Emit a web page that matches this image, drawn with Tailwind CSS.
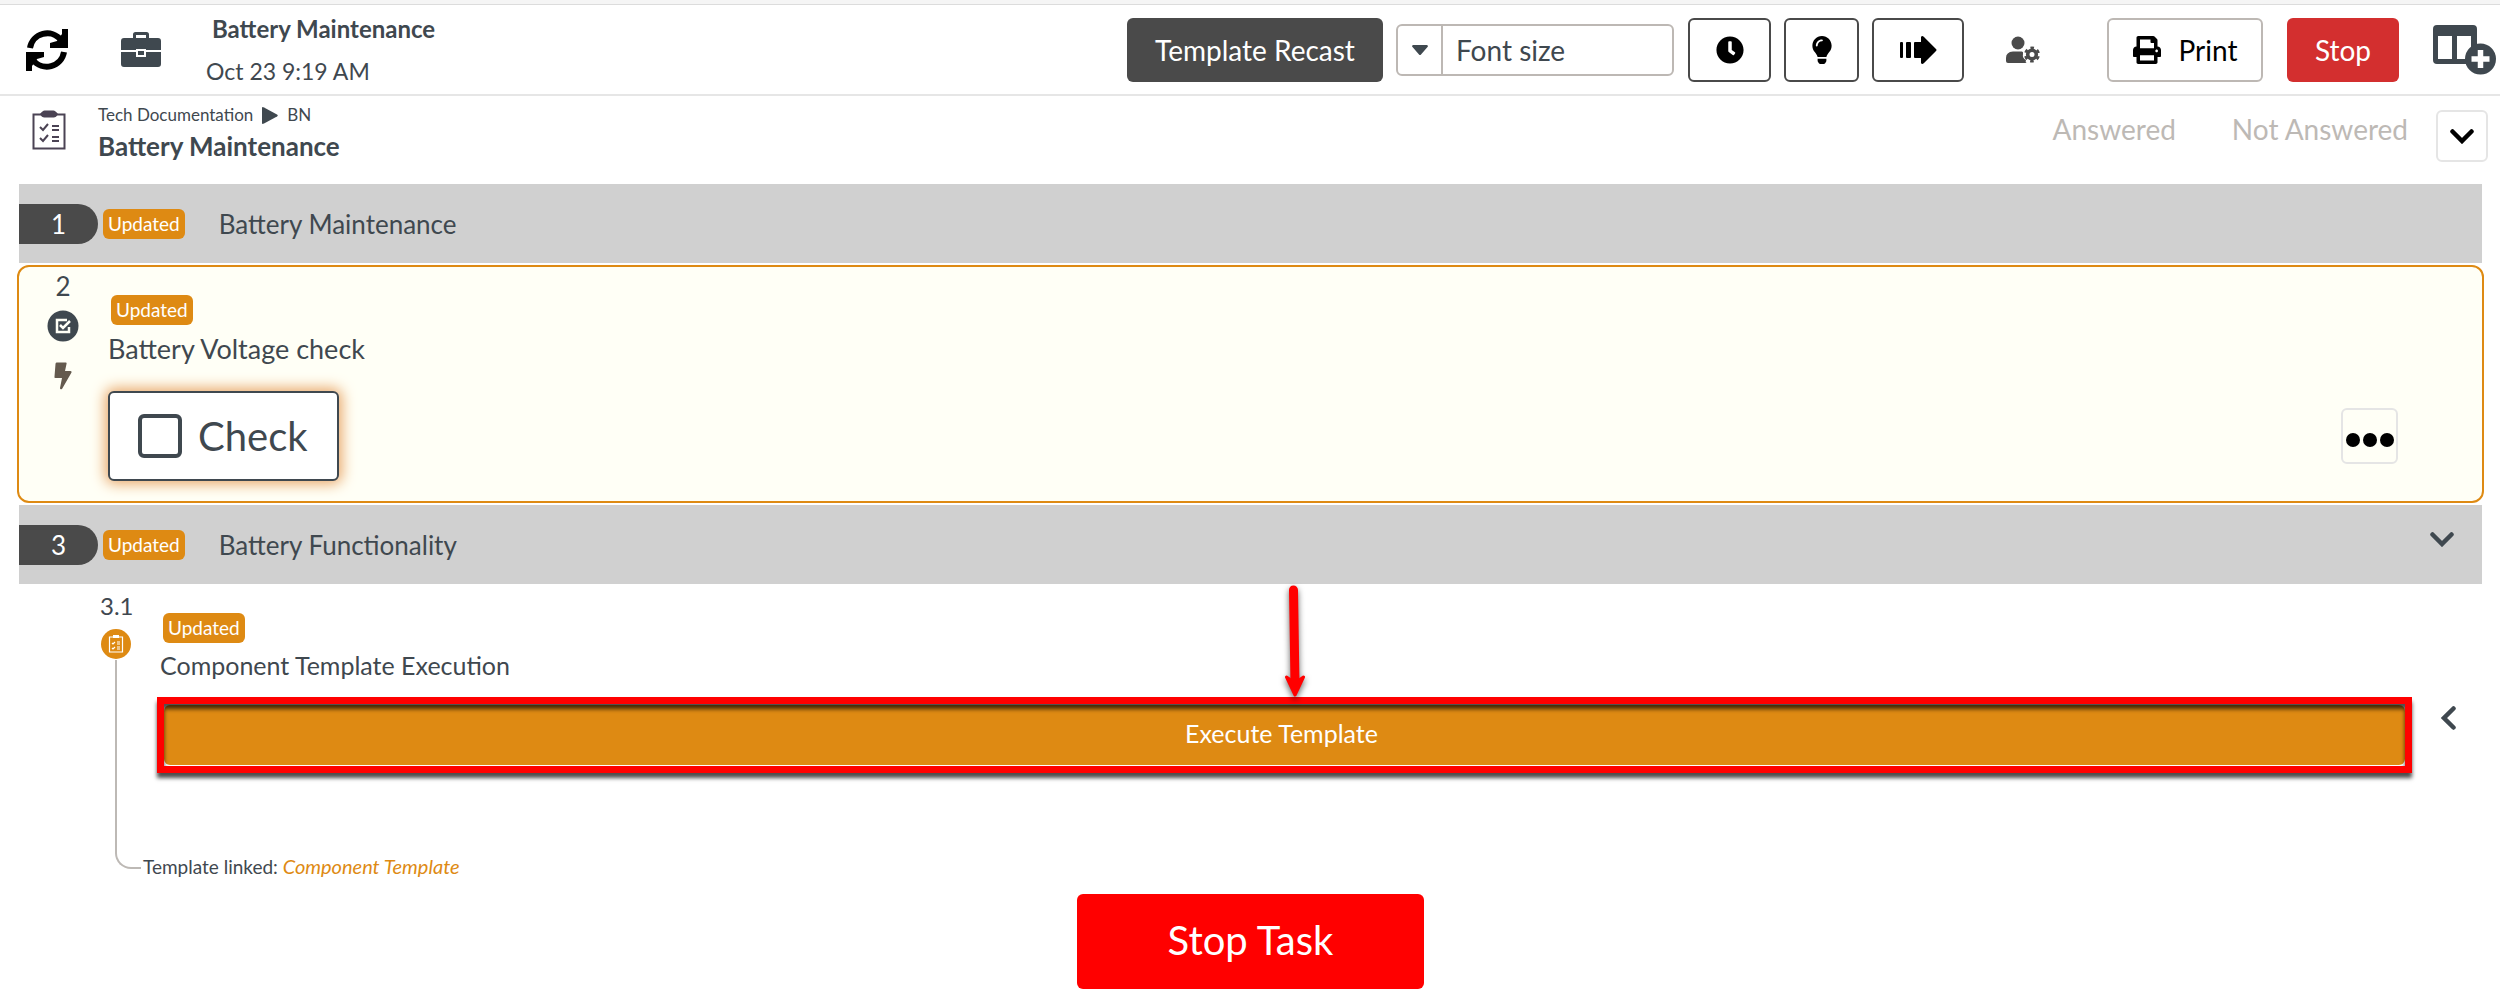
<!DOCTYPE html>
<html lang="en">
  <head>
    <meta charset="UTF-8" />
    <meta name="viewport" content="width=device-width, initial-scale=1.0" />
    <title>Battery Maintenance</title>
    <script src="https://cdn.jsdelivr.net/npm/@tailwindcss/browser@4"></script>
  </head>

  <body class="bg-white font-['Lato',sans-serif] text-[26px] leading-[32px] text-[#3f484f]">
    <div class="h-[5px] bg-[#f5f5f5] border-b border-[#dcdcdc]"></div>

    <!-- Top bar -->
    <header class="flex items-center h-[91px] pl-[26px] pr-1 border-b-2 border-[#e6e6e6]">
      <button type="button" aria-label="Refresh">
        <svg class="w-[42px] h-[42px]" viewBox="0 0 42 42" fill="none" stroke="#000" stroke-width="6">
          <path d="M4 19A17.5 17.5 0 0 1 35 11" />
          <path d="M38 23A17.5 17.5 0 0 1 7 31" />
          <path d="M42 0V19H24V14L31 12L36 5V0Z" fill="#000" stroke="none" />
          <path d="M0 42V23H18V28L11 30L6 37V42Z" fill="#000" stroke="none" />
        </svg>
      </button>
      <svg class="w-10 h-[35px] ml-[53px]" viewBox="0 0 40 35" fill="#3f484f">
        <path d="M13.500 6V2.500Q13.500 1.500 14.500 1.500H25.500Q26.500 1.500 26.500 2.500V6" fill="none" stroke="#3f484f" stroke-width="3" />
        <path d="M3 6H37Q40 6 40 9V18H25V17H15V18H0V9Q0 6 3 6Z" />
        <path d="M0 20H15V25H25V20H40V32Q40 35 37 35H3Q0 35 0 32Z" />
        <path d="M17 19H23V23H17Z" />
      </svg>
      <div class="ml-[45px] leading-[42px]">
        <h1 class="pl-1.5 text-[24px] font-bold">Battery Maintenance</h1>
        <p class="text-[23px]">Oct 23 9:19 AM</p>
      </div>

      <div class="flex items-center ml-auto text-[28px]">
        <button type="button" class="w-[256px] h-16 rounded-md bg-[#4a4a4a] text-white">Template Recast</button>
        <div class="flex ml-[13px] w-[278px] h-[52px] border-2 border-[#bdb8b4] rounded-md">
          <button type="button" class="flex items-center justify-center shrink-0 w-[45px] border-r-2 border-[#bdb8b4]" aria-label="Show font sizes">
            <svg class="w-4 h-[10px]" viewBox="0 0 16 10" fill="#3f484f"><path d="M1 0H15Q16.500 1 15.500 2L9 9.500Q8 10.500 7 9.500L.5 2Q-.5 1 1 0Z" /></svg>
          </button>
          <input type="text" aria-label="Font size" placeholder="Font size" class="w-full pl-[13px] text-[28px] outline-none placeholder:text-[#3f484f]" />
        </div>
        <button type="button" class="flex items-center justify-center ml-[14px] w-[83px] h-16 border-2 border-[#4a4a4a] rounded-md" aria-label="Time">
          <svg class="w-7 h-7" viewBox="0 0 512 512"><path d="M256,8C119,8,8,119,8,256S119,504,256,504,504,393,504,256,393,8,256,8Zm92.49,313h0l-20,25a16,16,0,0,1-22.49,2.500h0l-67-49.720a40,40,0,0,1-15-31.230V112a16,16,0,0,1,16-16h32a16,16,0,0,1,16,16V256l58,42.500A16,16,0,0,1,348.490,321Z" /></svg>
        </button>
        <button type="button" class="flex items-center justify-center ml-[13px] w-[75px] h-16 border-2 border-[#4a4a4a] rounded-md" aria-label="Hint">
          <svg class="w-5 h-7" viewBox="0 0 352 512"><path d="M96.060 454.350c.01 6.290 1.870 12.450 5.360 17.690l17.090 25.690a31.990 31.990 0 0 0 26.640 14.280h61.710a31.990 31.990 0 0 0 26.640-14.280l17.090-25.690a31.989 31.989 0 0 0 5.360-17.690l.04-38.350H96.010l.05 38.350zM0 176c0 44.370 16.450 84.850 43.560 115.780 16.520 18.850 42.360 58.230 52.210 91.450.04.26.07.52.11.78h160.240c.04-.26.07-.51.11-.78 9.850-33.220 35.690-72.600 52.210-91.450C335.550 260.850 352 220.370 352 176 352 78.610 272.910-.3 175.450 0 73.440.31 0 82.970 0 176zm176-80c-44.110 0-80 35.890-80 80 0 8.840-7.160 16-16 16s-16-7.160-16-16c0-61.760 50.240-112 112-112 8.840 0 16 7.160 16 16s-7.160 16-16 16z" /></svg>
        </button>
        <button type="button" class="flex items-center justify-center ml-[13px] w-[92px] h-16 border-2 border-[#4a4a4a] rounded-md" aria-label="Next step">
          <svg class="w-[37px] h-7" viewBox="0 0 37 28">
            <rect x="0" y="6" width="3" height="16" rx="1" />
            <rect x="6" y="6" width="5" height="16" rx="1" />
            <path d="M15 6H21V1Q22 -1 24 1L36 13Q37 14 36 15L24 27Q22 29 21 27V22H15Q14 22 14 21V7Q14 6 15 6Z" />
          </svg>
        </button>
        <button type="button" class="ml-[42px]" aria-label="User settings">
          <svg class="w-[34px] h-7" viewBox="0 0 34 28" fill="#4a4a4a">
            <circle cx="12" cy="7" r="6.500" />
            <path d="M7 15.500H16Q17.500 15.500 17 18Q16 22 20 24Q19 27 21 27H2Q0 27 0 25V22Q0 16 7 15.500Z" />
            <circle cx="26" cy="18.500" r="4.300" fill="none" stroke="#4a4a4a" stroke-width="3.600" />
            <circle cx="26" cy="18.500" r="6.800" fill="none" stroke="#4a4a4a" stroke-width="2.400" stroke-dasharray="3.560 3.560" stroke-dashoffset="-1.780" />
          </svg>
        </button>
        <button type="button" class="flex items-center justify-center gap-[18px] ml-[67px] w-[156px] h-16 border-2 border-[#bdb8b4] rounded-md text-black">
          <svg class="w-7 h-7" viewBox="0 0 512 512"><path d="M448 192V77.250c0-8.490-3.370-16.620-9.370-22.630L393.370 9.370c-6-6-14.140-9.370-22.630-9.370H96C78.330 0 64 14.330 64 32v160c-35.350 0-64 28.650-64 64v112c0 8.840 7.160 16 16 16h48v96c0 17.670 14.330 32 32 32h320c17.670 0 32-14.330 32-32v-96h48c8.840 0 16-7.160 16-16V256c0-35.350-28.650-64-64-64zm-64 256H128v-96h256v96zm0-224H128V64h192v48c0 8.840 7.160 16 16 16h48v96zm48 72c-13.250 0-24-10.750-24-24 0-13.260 10.750-24 24-24s24 10.740 24 24c0 13.250-10.750 24-24 24z" /></svg>
          Print
        </button>
        <button type="button" class="ml-6 w-28 h-16 rounded-md bg-[#d32f2f] text-white">Stop</button>
        <button type="button" class="ml-[34px]" aria-label="Add column">
          <svg class="w-[63px] h-[50px]" viewBox="0 0 63 50">
            <path fill="#3f484f" fill-rule="evenodd" d="M4 0H40Q44 0 44 4V35Q44 39 40 39H4Q0 39 0 35V4Q0 0 4 0ZM5 11V34H19V11ZM24 11V34H38V11Z" />
            <circle cx="47.500" cy="34" r="15.500" fill="#3f484f" />
            <path d="M47.500 25V43M38.500 34H56.500" stroke="#fff" stroke-width="5.500" />
          </svg>
        </button>
      </div>
    </header>

    <!-- Document title -->
    <div class="flex h-[88px] pl-8 pr-3 pt-[14px]">
      <svg class="w-[34px] h-10" viewBox="0 0 34 40" fill="none" stroke="#4b4354" stroke-width="2">
        <path d="M1.500 4.500H32.500V38.500H1.500Z" />
        <path d="M8 4Q11 0 13 .5H21Q23 0 26 4Q24 8 21 7.500H13Q10 8 8 4Z" fill="#4b4354" stroke="none" />
        <path d="M8 17L11 20L16 14M8 28L11 31L16 25M20 16H27M20 20H27M20 27H27M20 31H27" />
      </svg>
      <div class="-mt-2.5 ml-8">
        <nav class="flex items-center h-[30px] text-[17px]" aria-label="Breadcrumb">
          <a href="#">Tech Documentation</a>
          <svg class="w-4 h-[17px] mx-[9px]" viewBox="0 0 16 17" fill="#3f484f"><path d="M0 1Q0-.5 2 .5L15 7.500Q16.500 8.500 15 9.500L2 16.500Q0 17.500 0 16Z" /></svg>
          <a href="#">BN</a>
        </nav>
        <h2 class="font-bold">Battery Maintenance</h2>
      </div>
      <div class="flex ml-auto text-[28px] leading-[38px] text-[#bdb9b5]">
        <span>Answered</span>
        <span class="ml-14">Not Answered</span>
        <button type="button" class="flex items-center justify-center ml-[28px] size-[52px] border-2 border-[#e5e5e5] rounded-md" aria-label="Expand">
          <svg class="w-6 h-[15px]" viewBox="0 0 24 15" fill="none" stroke="#000" stroke-width="4.500" stroke-linecap="round"><path d="M2.500 2.500L12 12L21.500 2.500" /></svg>
        </button>
      </div>
    </div>

    <main class="pl-[17px] pr-4">
      <!-- Step 1 -->
      <section class="flex items-center mx-0.5 h-[79px] bg-[#d0d0d0]">
        <span class="w-[79px] h-10 rounded-r-full bg-[#4a4a4a] text-white text-center leading-10">1</span>
        <span class="ml-[5px] px-[5px] rounded-md bg-[#de8a13] text-white text-[19px] leading-[30px]">Updated</span>
        <h3 class="ml-[34px]">Battery Maintenance</h3>
      </section>

      <!-- Step 2 -->
      <section class="flex my-0.5 h-[238px] border-2 border-[#de8a13] rounded-xl bg-[#fffff6]">
        <div class="flex flex-col items-center ml-[28px] pt-[3px] w-8">
          <span>2</span>
          <svg class="w-8 h-8 mt-2" viewBox="0 0 32 32">
            <circle cx="16" cy="16" r="15.500" fill="#3f484f" />
            <path d="M20 10H10V22H22V17M13 15L16 18L23 11" fill="none" stroke="#fffff6" stroke-width="2.500" />
          </svg>
          <svg class="w-[18px] h-7 mt-5" viewBox="0 0 18 28" fill="#645a4e"><path d="M2.500 0.500H12Q13 .5 12.500 2L11 9H16.500Q18 9 17.500 10.500L8 27Q6 28 6 26L8 16H1.500Q0 16 .5 14.500L1.500 2Q1.500 .5 2.500 .5Z" /></svg>
        </div>
        <div class="flex flex-col items-start ml-[29px] pt-7">
          <span class="ml-[3px] px-[5px] rounded-md bg-[#de8a13] text-white text-[19px] leading-[30px]">Updated</span>
          <h3 class="mt-2 text-[27px]">Battery Voltage check</h3>
          <label class="flex items-center gap-4 mt-[26px] w-[231px] h-[90px] pl-7 border-2 border-[#3f484f] rounded-md bg-white text-[40px] shadow-[0_0_14px_3px_#e9a86a]">
            <input type="checkbox" class="appearance-none size-11 border-4 border-[#3f484f] rounded-md checked:bg-[#3f484f]" />
            Check
          </label>
        </div>
        <button type="button" class="flex items-center justify-center gap-[3px] ml-auto mr-[84px] mt-[141px] w-[57px] h-14 pt-2 border-2 border-[#e5e5e5] rounded-md" aria-label="More">
          <span class="size-[14px] rounded-full bg-black"></span>
          <span class="size-[14px] rounded-full bg-black"></span>
          <span class="size-[14px] rounded-full bg-black"></span>
        </button>
      </section>

      <!-- Step 3 -->
      <section class="flex items-center mx-0.5 h-[79px] bg-[#d0d0d0]">
        <span class="w-[79px] h-10 rounded-r-full bg-[#4a4a4a] text-white text-center leading-10">3</span>
        <span class="ml-[5px] px-[5px] rounded-md bg-[#de8a13] text-white text-[19px] leading-[30px]">Updated</span>
        <h3 class="ml-[34px]">Battery Functionality</h3>
        <button type="button" class="ml-auto mr-7 pb-[10px]" aria-label="Collapse">
          <svg class="w-6 h-[15px]" viewBox="0 0 24 15" fill="none" stroke="#3f484f" stroke-width="4.500" stroke-linecap="round"><path d="M2.500 2.500L12 12L21.500 2.500" /></svg>
        </button>
      </section>

      <!-- Step 3.1 -->
      <section class="relative flex pl-[83px] pt-1.5 pr-7">
        <div class="flex flex-col w-[43px]">
          <span class="w-8 text-[24px] text-center">3.1</span>
          <svg class="w-8 h-8 mt-1.5 shrink-0" viewBox="0 0 32 32">
            <circle cx="16" cy="16" r="15" fill="#de8a13" />
            <path d="M9.500 9H22.500V24H9.500ZM12 15L13 16L15 14M12 20L13 21L15 19M17 14H20M17 16H20M17 19H20M17 21H20" fill="none" stroke="#fff" stroke-width="1.200" />
            <path d="M13 7H19V10H13Z" fill="#fff" />
          </svg>
          <div class="grow ml-[15px] mb-[14px] w-[26px] border-l-2 border-b-2 border-[#bdb9b5] rounded-bl-[16px]"></div>
        </div>
        <div class="grow pt-[23px]">
          <div class="flex flex-col items-start pl-[17px]">
            <span class="ml-[3px] px-[5px] rounded-md bg-[#de8a13] text-white text-[19px] leading-[30px]">Updated</span>
            <h3 class="mt-1.5 text-[25px]">Component Template Execution</h3>
          </div>
          <div class="relative ml-[14px] mt-4 px-[7px] py-2">
            <button type="button" class="block w-full h-[60px] pr-1.5 pb-1 rounded-md bg-[#de8a13] text-white text-[25px]">Execute Template</button>
            <!-- highlight frame -->
            <div class="absolute inset-0 border-[7px] border-[#ff0000] pointer-events-none shadow-[0_5px_4px_rgba(0,0,0,0.7),inset_0_5px_4px_rgba(0,0,0,0.7)]"></div>
          </div>
          <p class="mt-[77px] text-[19px]">Template linked: <a href="#" class="italic text-[20px] text-[#de8a13]">Component Template</a></p>
        </div>
        <button type="button" class="self-start ml-[29px] mt-[116px]" aria-label="Open details">
          <svg class="w-[15px] h-6" viewBox="0 0 15 24" fill="none" stroke="#3f484f" stroke-width="4.500" stroke-linecap="round"><path d="M12.500 2.500L3 12L12.500 21.500" /></svg>
        </button>
        <!-- pointer arrow over the button -->
        <svg class="absolute left-1/2 ml-6 top-0 w-10 h-[116px] drop-shadow-[0_3px_3px_rgba(0,0,0,0.6)]" viewBox="0 0 40 116" fill="#ff0000" stroke="#ff0000" stroke-linecap="round" stroke-linejoin="round">
          <path d="M18.500 6L20 100" stroke-width="9" />
          <path d="M11.500 93L20 111L28.500 93L20 99Z" stroke-width="3" />
        </svg>
      </section>

      <div class="flex justify-center pt-[11px] pb-4">
        <button type="button" class="w-[347px] h-[95px] pb-1 rounded-md bg-[#ff0000] text-white text-[40px]">Stop Task</button>
      </div>
    </main>
  </body>
</html>
